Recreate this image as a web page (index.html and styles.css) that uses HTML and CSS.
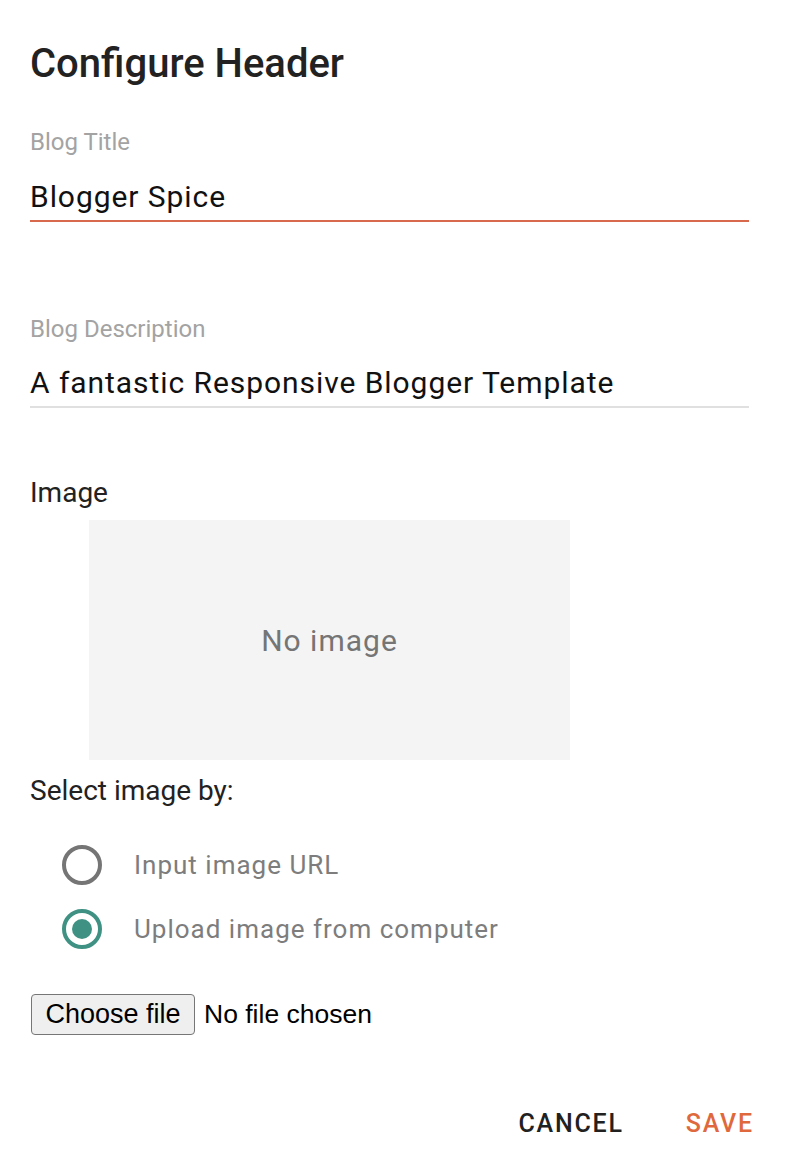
FILE: index.html
```html
<!DOCTYPE html>
<html lang="en">
<head>
<meta charset="utf-8">
<title>Configure Header</title>
<link rel="stylesheet" href="styles.css">
</head>
<body>
<div class="dialog">
  <h1 class="title">Configure Header</h1>

  <div class="field">
    <div class="field-label">Blog Title</div>
    <div class="field-input focused">Blogger Spice</div>
  </div>

  <div class="field field-second">
    <div class="field-label">Blog Description</div>
    <div class="field-input">A fantastic Responsive Blogger Template</div>
  </div>

  <div class="section-label image-label">Image</div>
  <div class="image-box">No image</div>

  <div class="section-label select-label">Select image by:</div>

  <div class="radio-group">
    <label class="radio-row">
      <span class="radio"></span>
      <span class="radio-text">Input image URL</span>
    </label>
    <label class="radio-row">
      <span class="radio checked"></span>
      <span class="radio-text">Upload image from computer</span>
    </label>
  </div>

  <div class="file-row">
    <button class="file-button" type="button">Choose file</button>
    <span class="file-status">No file chosen</span>
  </div>

  <div class="actions">
    <button class="action cancel" type="button">CANCEL</button>
    <button class="action save" type="button">SAVE</button>
  </div>
</div>
</body>
</html>
```

FILE: styles.css
```css
html, body {
  margin: 0;
  padding: 0;
  background: #ffffff;
}

body {
  font-family: Roboto, "Noto Sans", Arial, sans-serif;
  color: #212121;
}

.dialog {
  width: 719px;
  padding: 40px 41px 0 30px;
}

.title {
  margin: 0;
  font-size: 40px;
  line-height: 48px;
  font-weight: 500;
  color: #222222;
}

.field {
  margin-top: 39px;
}

.field-second {
  margin-top: 92px;
}

.field-label {
  font-size: 24px;
  line-height: 30px;
  color: #a3a3a3;
}

.field-input {
  margin-top: 20px;
  font-size: 30px;
  line-height: 40px;
  letter-spacing: 0.94px;
  color: #111111;
  padding-bottom: 3px;
  border-bottom: 2px solid #e0e0e0;
}

.field-input.focused {
  border-bottom-color: #d9694c;
}

.field-second .field-input {
  margin-top: 19px;
}

.section-label {
  font-size: 28px;
  line-height: 34px;
  color: #222222;
}

.image-label {
  margin-top: 68px;
}

.image-box {
  margin: 10px 0 0 59px;
  width: 481px;
  height: 240px;
  background: #f4f4f4;
  display: flex;
  align-items: center;
  justify-content: center;
  font-size: 30px;
  letter-spacing: 1px;
  color: #757575;
}

.select-label {
  margin-top: 14px;
}

.radio-group {
  margin-top: 37px;
  display: flex;
  flex-direction: column;
  gap: 24px;
  padding-left: 32px;
}

.radio-row {
  display: flex;
  align-items: center;
  height: 40px;
  gap: 32px;
}

.radio {
  box-sizing: border-box;
  width: 40px;
  height: 40px;
  border-radius: 50%;
  border: 4px solid #757575;
  display: flex;
  align-items: center;
  justify-content: center;
}

.radio.checked {
  border-color: #3f9283;
}

.radio.checked::after {
  content: "";
  width: 20px;
  height: 20px;
  border-radius: 50%;
  background: #3f9283;
}

.radio-text {
  font-size: 26px;
  line-height: 40px;
  letter-spacing: 1px;
  color: #7d7d7d;
}

.file-row {
  margin-top: 45px;
  display: flex;
  align-items: center;
  gap: 9px;
  font-family: "Liberation Sans", Arial, sans-serif;
}

.file-button {
  box-sizing: border-box;
  width: 164px;
  height: 41px;
  margin: 0 0 0 1px;
  padding: 0;
  border: 1px solid #767676;
  border-radius: 4px;
  background: #efefef;
  font-family: "Liberation Sans", Arial, sans-serif;
  font-size: 27px;
  color: #000000;
}

.file-status {
  font-size: 26.5px;
  color: #000000;
}

.actions {
  margin-top: 74px;
  margin-right: -5px;
  display: flex;
  justify-content: flex-end;
  gap: 62px;
}

.action {
  border: 0;
  background: none;
  padding: 0;
  font-family: Roboto, "Noto Sans", Arial, sans-serif;
  font-size: 25px;
  line-height: 30px;
  font-weight: 500;
  letter-spacing: 1.8px;
}

.cancel {
  color: #212121;
}

.save {
  color: #df693d;
}
```
